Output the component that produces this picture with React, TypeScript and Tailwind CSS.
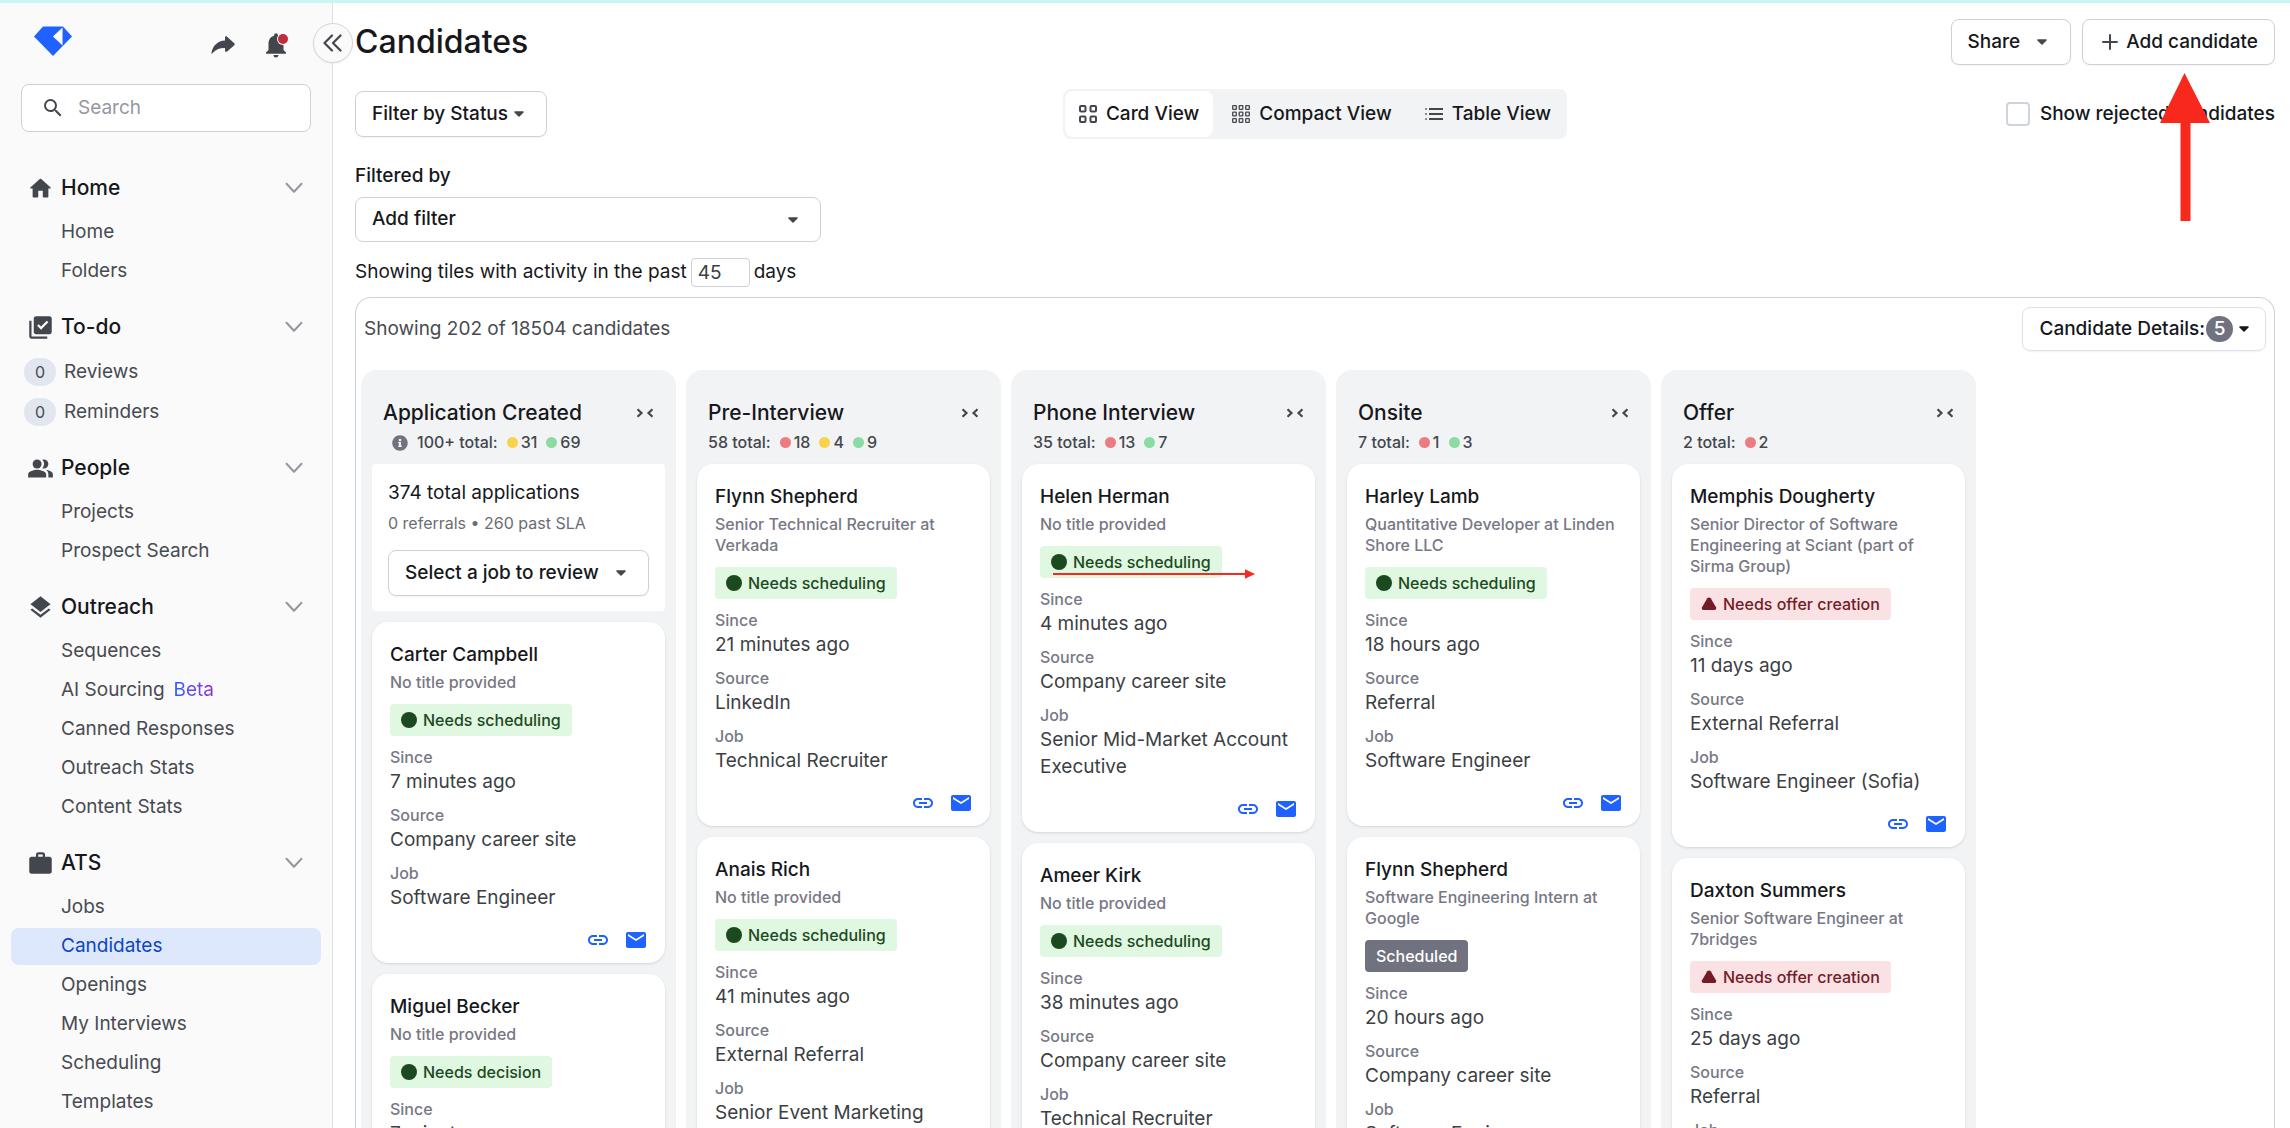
import type { ReactNode } from 'react';
import { FaInfoCircle } from 'react-icons/fa';
import { MdEmail, MdLayers, MdLibraryAddCheck, MdLink, MdNotifications, MdPeopleAlt, MdSearch, MdWork } from 'react-icons/md';

// ---------- Types ----------

type Tone = 'red' | 'yellow' | 'green';
type StatusKind = 'ready' | 'alert' | 'scheduled';

interface NavItem {
  label: string;
  count?: number;
  beta?: boolean;
  active?: boolean;
}

interface NavSection {
  label: string;
  icon: ReactNode;
  items: NavItem[];
}

interface Candidate {
  name: string;
  title: string;
  status: string;
  kind: StatusKind;
  since: string;
  source: string;
  job: string;
  pointer?: boolean;
}

interface Stage {
  name: string;
  total: string;
  info?: boolean;
  counts: { tone: Tone; value: number }[];
  review?: boolean;
  candidates: Candidate[];
}

// ---------- Icons ----------

function HomeIcon() {
  return (
    <svg viewBox="0 0 24 24" className="size-[27px]" fill="currentColor">
      <path d="M10 19v-5h4v5c0 .55.45 1 1 1h3c.55 0 1-.45 1-1v-7h1.7c.46 0 .68-.57.33-.87L12.67 3.6c-.38-.34-.96-.34-1.34 0l-8.36 7.53c-.34.3-.13.87.33.87H5v7c0 .55.45 1 1 1h3c.55 0 1-.45 1-1z" />
    </svg>
  );
}

function Logo() {
  return (
    <svg viewBox="0 0 38 30" className="h-[30px] w-[38px]">
      <path d="M9 .5h20l9 10L19 30 0 10.5z" fill="#1f62ff" />
      <path d="M28.500 1.500v18l-9.500-9z" fill="#fff" />
    </svg>
  );
}

function ForwardIcon() {
  return (
    <svg viewBox="0 0 24 18" className="h-[18px] w-6" fill="currentColor">
      <path d="M14 1.600c0-1.300 1.200-1.800 2.100-.9l6.900 6.200c.9.800.9 1.700 0 2.500l-6.900 6c-.9.800-2.100.4-2.100-.9v-2.600C8.500 11.800 4.500 13.600 1.400 17.300c-.5.6-1.100.4-.9-.5C1.800 9.800 6.500 5 14 4.600z" />
    </svg>
  );
}

function Caret({ className = 'text-[#43474d]' }: { className?: string }) {
  return (
    <svg viewBox="0 0 10 6" className={`h-[6px] w-[10px] shrink-0 ${className}`}>
      <path d="M1 1h8L5 5z" fill="currentColor" stroke="currentColor" strokeWidth="1.600" strokeLinejoin="round" />
    </svg>
  );
}

function ChevronDown() {
  return (
    <svg viewBox="0 0 18 12" className="h-3 w-[18px] text-[#95979f]" fill="none" stroke="currentColor" strokeWidth="2" strokeLinecap="round" strokeLinejoin="round">
      <path d="M1.500 1.800 9 9.800l7.500-8" />
    </svg>
  );
}

function CardGridIcon() {
  return (
    <svg viewBox="0 0 18 18" className="size-[18px]" fill="none" stroke="currentColor" strokeWidth="2">
      <rect x="1" y="1" width="5.500" height="5.500" rx="1" />
      <rect x="11.500" y="1" width="5.500" height="5.500" rx="1" />
      <rect x="1" y="11.500" width="5.500" height="5.500" rx="1" />
      <rect x="11.500" y="11.500" width="5.500" height="5.500" rx="1" />
    </svg>
  );
}

function CompactGridIcon() {
  const cells = [0.7, 7.2, 13.7];
  return (
    <svg viewBox="0 0 18 18" className="size-[18px]" fill="none" stroke="currentColor" strokeWidth="1.300">
      {cells.map((y) => cells.map((x) => <rect key={`${x}-${y}`} x={x} y={y} width="3.600" height="3.600" rx=".6" />))}
    </svg>
  );
}

function ListIcon() {
  return (
    <svg viewBox="0 0 18 12" className="h-3 w-[18px]" stroke="currentColor" strokeWidth="2">
      <path d="M0 1h2M0 6h2M0 11h2" opacity=".6" />
      <path d="M4 1h14M4 6h14M4 11h14" />
    </svg>
  );
}

// ---------- Sidebar ----------

const sections: NavSection[] = [
  { label: 'Home', icon: <HomeIcon />, items: [{ label: 'Home' }, { label: 'Folders' }] },
  {
    label: 'To-do',
    icon: <MdLibraryAddCheck className="size-[27px]" />,
    items: [
      { label: 'Reviews', count: 0 },
      { label: 'Reminders', count: 0 },
    ],
  },
  {
    label: 'People',
    icon: <MdPeopleAlt className="size-[27px]" />,
    items: [{ label: 'Projects' }, { label: 'Prospect Search' }],
  },
  {
    label: 'Outreach',
    icon: <MdLayers className="size-[27px]" />,
    items: [
      { label: 'Sequences' },
      { label: 'AI Sourcing', beta: true },
      { label: 'Canned Responses' },
      { label: 'Outreach Stats' },
      { label: 'Content Stats' },
    ],
  },
  {
    label: 'ATS',
    icon: <MdWork className="size-[27px]" />,
    items: [
      { label: 'Jobs' },
      { label: 'Candidates', active: true },
      { label: 'Openings' },
      { label: 'My Interviews' },
      { label: 'Scheduling' },
      { label: 'Templates' },
    ],
  },
];

function NavLink({ item }: { item: NavItem }) {
  if (item.count !== undefined) {
    return (
      <a href="#" className="flex h-[38px] items-center gap-2 pl-[13px] text-[#474b51]">
        <span className="flex h-7 w-8 items-center justify-center rounded-full bg-[#e2e6ee] text-base">{item.count}</span>
        {item.label}
      </a>
    );
  }
  return (
    <a
      href="#"
      className={`flex h-[37px] items-center gap-[9px] rounded-lg pl-[50px] ${
        item.active ? 'bg-[#dde8fd] text-[#0e45c4]' : 'text-[#474b51]'
      }`}
    >
      {item.label}
      {item.beta && (
        <span className="bg-linear-to-r from-[#1f5cff] to-[#8a2bd2] bg-clip-text text-transparent">Beta</span>
      )}
    </a>
  );
}

function Sidebar() {
  return (
    <aside className="relative w-[333px] shrink-0 border-r border-[#dfe0e7] bg-[#fafafa]">
      <div className="flex items-start justify-between pt-[23px] pr-[41px] pl-[34px]">
        <a href="#" aria-label="Dashboard">
          <Logo />
        </a>
        <div className="flex items-center gap-[26px] pt-1 text-[#43474d]">
          <button type="button" aria-label="Shortcuts">
            <ForwardIcon />
          </button>
          <button type="button" aria-label="Notifications" className="relative">
            <MdNotifications className="size-[30px]" />
            <span className="absolute top-1 right-[3px] size-[10px] rounded-full bg-[#c32a3d] ring-1 ring-[#fafafa]" />
          </button>
        </div>
      </div>

      <button
        type="button"
        aria-label="Collapse sidebar"
        className="absolute top-5 -right-[21px] flex size-10 items-center justify-center rounded-full border border-[#d3d5de] bg-[#fafafa] text-[#43474d] shadow-xs"
      >
        <svg viewBox="0 0 20 18" className="h-[18px] w-5" fill="none" stroke="currentColor" strokeWidth="2.200" strokeLinecap="round" strokeLinejoin="round">
          <path d="M9 1.500 1.500 9 9 16.500M17.500 1.500 10 9l7.500 7.500" />
        </svg>
      </button>

      <label className="mx-[21px] mt-6 flex h-12 items-center gap-[13px] rounded-lg border border-[#cfd1da] bg-white px-[19px]">
        <MdSearch className="size-6 shrink-0 text-[#43474d]" />
        <input type="search" placeholder="Search" aria-label="Search" className="w-full min-w-0 outline-none placeholder:text-[#9698a1]" />
      </label>

      <nav className="flex flex-col gap-[17px] px-[11px] pt-9">
        {sections.map((section) => (
          <div key={section.label} className="flex flex-col gap-[6px]">
            <button type="button" className="flex h-10 items-center gap-[7px] pr-[18px] pl-4 text-[21px] font-medium text-[#16181b]">
              <span className="text-[#43474d]">{section.icon}</span>
              <span className="flex-1 text-left">{section.label}</span>
              <ChevronDown />
            </button>
            <div className="flex flex-col gap-[2px]">
              {section.items.map((item) => (
                <NavLink key={item.label} item={item} />
              ))}
            </div>
          </div>
        ))}
      </nav>
    </aside>
  );
}

// ---------- Board ----------

const stages: Stage[] = [
  {
    name: 'Application Created',
    total: '100+ total:',
    info: true,
    counts: [
      { tone: 'yellow', value: 31 },
      { tone: 'green', value: 69 },
    ],
    review: true,
    candidates: [
      { name: 'Carter Campbell', title: 'No title provided', status: 'Needs scheduling', kind: 'ready', since: '7 minutes ago', source: 'Company career site', job: 'Software Engineer' },
      { name: 'Miguel Becker', title: 'No title provided', status: 'Needs decision', kind: 'ready', since: '7 minutes ago', source: 'Company career site', job: 'Software Engineer' },
    ],
  },
  {
    name: 'Pre-Interview',
    total: '58 total:',
    counts: [
      { tone: 'red', value: 18 },
      { tone: 'yellow', value: 4 },
      { tone: 'green', value: 9 },
    ],
    candidates: [
      { name: 'Flynn Shepherd', title: 'Senior Technical Recruiter at Verkada', status: 'Needs scheduling', kind: 'ready', since: '21 minutes ago', source: 'LinkedIn', job: 'Technical Recruiter' },
      { name: 'Anais Rich', title: 'No title provided', status: 'Needs scheduling', kind: 'ready', since: '41 minutes ago', source: 'External Referral', job: 'Senior Event Marketing Manager' },
    ],
  },
  {
    name: 'Phone Interview',
    total: '35 total:',
    counts: [
      { tone: 'red', value: 13 },
      { tone: 'green', value: 7 },
    ],
    candidates: [
      { name: 'Helen Herman', title: 'No title provided', status: 'Needs scheduling', kind: 'ready', since: '4 minutes ago', source: 'Company career site', job: 'Senior Mid-Market Account Executive', pointer: true },
      { name: 'Ameer Kirk', title: 'No title provided', status: 'Needs scheduling', kind: 'ready', since: '38 minutes ago', source: 'Company career site', job: 'Technical Recruiter' },
    ],
  },
  {
    name: 'Onsite',
    total: '7 total:',
    counts: [
      { tone: 'red', value: 1 },
      { tone: 'green', value: 3 },
    ],
    candidates: [
      { name: 'Harley Lamb', title: 'Quantitative Developer at Linden Shore LLC', status: 'Needs scheduling', kind: 'ready', since: '18 hours ago', source: 'Referral', job: 'Software Engineer' },
      { name: 'Flynn Shepherd', title: 'Software Engineering Intern at Google', status: 'Scheduled', kind: 'scheduled', since: '20 hours ago', source: 'Company career site', job: 'Software Engineer' },
    ],
  },
  {
    name: 'Offer',
    total: '2 total:',
    counts: [{ tone: 'red', value: 2 }],
    candidates: [
      { name: 'Memphis Dougherty', title: 'Senior Director of Software Engineering at Sciant (part of Sirma Group)', status: 'Needs offer creation', kind: 'alert', since: '11 days ago', source: 'External Referral', job: 'Software Engineer (Sofia)' },
      { name: 'Daxton Summers', title: 'Senior Software Engineer at 7bridges', status: 'Needs offer creation', kind: 'alert', since: '25 days ago', source: 'Referral', job: 'Software Engineer' },
    ],
  },
];

const toneClass: Record<Tone, string> = {
  red: 'bg-[#ec7b82]',
  yellow: 'bg-[#f7d44c]',
  green: 'bg-[#8bdca4]',
};

const statusClass: Record<StatusKind, string> = {
  ready: 'bg-[#e0f7e2] text-[#1c4a20]',
  alert: 'bg-[#fae2e4] text-[#731c28]',
  scheduled: 'bg-[#71727f] text-white',
};

function StatusBadge({ kind, children }: { kind: StatusKind; children: ReactNode }) {
  return (
    <span className={`inline-flex h-8 items-center gap-[6px] rounded px-[11px] text-base font-medium ${statusClass[kind]}`}>
      {kind === 'ready' && <span className="size-4 rounded-full bg-current" />}
      {kind === 'alert' && (
        <svg viewBox="0 0 16 14" className="h-[14px] w-4" fill="currentColor">
          <path d="M6.300 1.300c.8-1 2.600-1 3.400 0l5.300 9c.7 1.300 0 2.700-1.500 2.700h-11C1 13 .3 11.600 1 10.300z" />
        </svg>
      )}
      {children}
    </span>
  );
}

function Field({ label, value }: { label: string; value: string }) {
  return (
    <div>
      <dt className="text-base leading-[21px] font-medium text-[#777885]">{label}</dt>
      <dd className="leading-[27px] text-[#3c3f44]">{value}</dd>
    </div>
  );
}

function CandidateCard({ candidate }: { candidate: Candidate }) {
  return (
    <article className="rounded-2xl bg-white px-[18px] pt-[19px] pb-[11px] shadow-sm">
      <h3 className="leading-[27px] font-medium text-[#16181b]">{candidate.name}</h3>
      <p className="mt-1 text-base leading-[21px] font-medium text-[#777885]">{candidate.title}</p>
      <div className="relative my-[11px] flex">
        <StatusBadge kind={candidate.kind}>{candidate.status}</StatusBadge>
        {candidate.pointer && (
          <svg viewBox="0 0 202 10" className="absolute top-[23px] left-[13px] h-[10px] w-[202px]" fill="#f8291c">
            <path d="M0 4h192V.3l10 4.700-10 4.700V6H0z" />
          </svg>
        )}
      </div>
      <dl className="flex flex-col gap-[10px]">
        <Field label="Since" value={candidate.since} />
        <Field label="Source" value={candidate.source} />
        <Field label="Job" value={candidate.job} />
      </dl>
      <div className="-mr-px mt-[17px] flex justify-end gap-[14px] text-[#1f62ff]">
        <button type="button" aria-label={`Copy link to ${candidate.name}`}>
          <MdLink className="size-6" />
        </button>
        <button type="button" aria-label={`Email ${candidate.name}`}>
          <MdEmail className="size-6" />
        </button>
      </div>
    </article>
  );
}

function ReviewPanel() {
  return (
    <div className="rounded bg-white px-4 py-[15px]">
      <p className="leading-[27px] text-[#16181b]">374 total applications</p>
      <p className="mt-[7px] text-base leading-[21px] text-[#6b6d72]">0 referrals • 260 past SLA</p>
      <div className="relative mt-4">
        <select
          aria-label="Select a job to review"
          className="h-[46px] w-full appearance-none rounded-lg border border-[#cfd1da] bg-white px-4 font-medium text-[#16181b] shadow-xs"
        >
          <option>Select a job to review</option>
        </select>
        <span className="pointer-events-none absolute inset-y-0 right-[23px] flex items-center">
          <Caret />
        </span>
      </div>
    </div>
  );
}

function StageColumn({ stage }: { stage: Stage }) {
  return (
    <section className="flex w-[315px] shrink-0 flex-col rounded-t-2xl bg-[#f2f3f5] px-[11px] pt-[29px]">
      <header className="px-[11px] pb-[11px]">
        <div className="flex items-center justify-between">
          <h2 className="text-[21px] leading-[27px] font-medium text-[#16181b]">{stage.name}</h2>
          <button type="button" aria-label={`Collapse ${stage.name}`} className="text-[#43474d]">
            <svg viewBox="0 0 18 10" className="h-[10px] w-[18px]" fill="none" stroke="currentColor" strokeWidth="2.200">
              <path d="M1.500 1.200 5.500 5l-4 3.800M16.500 1.200l-4 3.800 4 3.800" />
            </svg>
          </button>
        </div>
        <div className="mt-[6px] flex items-center gap-[9px] text-base leading-[21px] font-medium text-[#43474d]">
          {stage.info && <FaInfoCircle className="ml-[9px] size-4 text-[#71727f]" />}
          <span>{stage.total}</span>
          {stage.counts.map((count) => (
            <span key={count.tone} className="flex items-center gap-[3px]">
              <span className={`size-[11px] rounded-full ${toneClass[count.tone]}`} />
              {count.value}
            </span>
          ))}
        </div>
      </header>
      <div className="flex flex-col gap-[11px]">
        {stage.review && <ReviewPanel />}
        {stage.candidates.map((candidate) => (
          <CandidateCard key={candidate.name} candidate={candidate} />
        ))}
      </div>
    </section>
  );
}

// ---------- Page ----------

const buttonClass =
  'flex h-[46px] items-center rounded-lg border border-[#cfd1da] bg-white px-4 font-medium text-[#16181b] shadow-xs';

function ViewTabs() {
  const tabs = [
    { label: 'Card View', icon: <CardGridIcon />, active: true },
    { label: 'Compact View', icon: <CompactGridIcon />, active: false },
    { label: 'Table View', icon: <ListIcon />, active: false },
  ];
  return (
    <div className="flex h-[50px] gap-[5px] rounded-lg bg-[#f2f3f5] p-[2px]">
      {tabs.map((tab) => (
        <button
          key={tab.label}
          type="button"
          aria-pressed={tab.active}
          className={`flex items-center gap-[9px] rounded-lg px-[14px] font-medium text-[#16181b] ${tab.active ? 'bg-white' : ''}`}
        >
          <span className="text-[#43474d]">{tab.icon}</span>
          {tab.label}
        </button>
      ))}
    </div>
  );
}

export default function App() {
  return (
    <div className="flex h-screen overflow-hidden border-t-[3px] border-[#c9f5f5] bg-white font-['Inter',sans-serif] text-[19px]">
      <Sidebar />

      <main className="flex min-w-0 flex-1 flex-col pt-4 pr-[15px] pl-[22px] text-[#16181b]">
        <div className="flex items-center justify-between">
          <h1 className="text-[32px] leading-[46px] font-medium">Candidates</h1>
          <div className="flex gap-[11px]">
            <button type="button" className={`${buttonClass} gap-[17px] pr-[23px]`}>
              Share
              <Caret />
            </button>
            <div className="relative">
              <button type="button" className={`${buttonClass} gap-2 pl-[19px]`}>
                <svg viewBox="0 0 16 16" className="size-4 text-[#43474d]" fill="none" stroke="currentColor" strokeWidth="2" strokeLinecap="round">
                  <path d="M8 1v14M1 8h14" />
                </svg>
                Add candidate
              </button>
              <svg viewBox="0 0 50 148" className="pointer-events-none absolute top-[54px] right-[65px] h-[148px] w-[50px]" fill="#f8291c">
                <path d="M24.500 0 50 50H30.500v98h-10V50H0z" />
              </svg>
            </div>
          </div>
        </div>

        <div className="mt-6 grid grid-cols-[1fr_auto_1fr] items-center">
          <button type="button" className={`${buttonClass} gap-[6px] justify-self-start pr-[22px]`}>
            Filter by Status
            <Caret />
          </button>
          <ViewTabs />
          <label className="flex items-center gap-[10px] justify-self-end font-medium">
            <input type="checkbox" className="size-6 appearance-none rounded border-2 border-[#cfd3da] bg-white" />
            Show rejected candidates
          </label>
        </div>

        <label htmlFor="add-filter" className="mt-[23px] leading-[27px] font-medium">
          Filtered by
        </label>
        <div className="relative mt-2 w-[466px]">
          <select id="add-filter" className="block h-[45px] w-full appearance-none rounded-lg border border-[#cfd1da] bg-white px-4 font-medium">
            <option>Add filter</option>
          </select>
          <span className="pointer-events-none absolute inset-y-0 right-[23px] flex items-center">
            <Caret />
          </span>
        </div>

        <label className="mt-4 flex items-center gap-1">
          Showing tiles with activity in the past
          <input type="text" defaultValue="45" className="h-[29px] w-[59px] rounded border border-[#cfd1da] px-[6px] text-[#3c3f44]" />
          days
        </label>

        <div className="mt-[10px] min-h-0 flex-1 overflow-hidden rounded-t-2xl border border-b-0 border-[#cfd1da] px-[5px] pt-[9px]">
          <div className="flex items-center justify-between px-[3px]">
            <p className="text-[#474b51]">Showing 202 of 18504 candidates</p>
            <button type="button" className="flex h-11 items-center rounded-lg border border-[#dfe0e7] px-4 font-medium shadow-xs">
              Candidate Details:
              <span className="ml-px flex h-[26px] w-[27px] items-center justify-center rounded-full bg-[#71727f] text-white">5</span>
              <span className="ml-[6px]">
                <Caret className="text-[#16181b]" />
              </span>
            </button>
          </div>
          <div className="mt-[19px] flex gap-[10px]">
            {stages.map((stage) => (
              <StageColumn key={stage.name} stage={stage} />
            ))}
          </div>
        </div>
      </main>
    </div>
  );
}
